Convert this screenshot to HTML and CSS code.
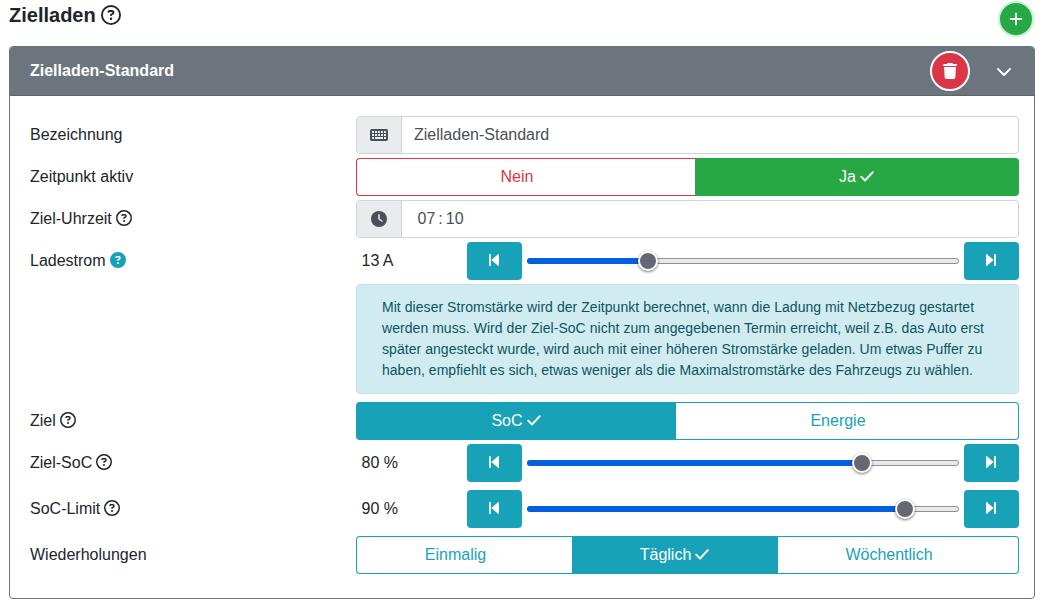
FILE: index.html
```html
<!DOCTYPE html>
<html lang="de">
<head>
<meta charset="utf-8">
<title>Zielladen</title>
<link rel="stylesheet" href="styles.css">
</head>
<body>
<svg class="sprite" aria-hidden="true">
  <symbol id="help" viewBox="0 0 512 512"><path d="M464 256A208 208 0 1 0 48 256a208 208 0 1 0 416 0zM0 256a256 256 0 1 1 512 0A256 256 0 1 1 0 256zm169.8-90.7c7.9-22.3 29.1-37.3 52.8-37.3l58.3 0c34.9 0 63.1 28.3 63.1 63.1c0 22.6-12.1 43.5-31.7 54.8L280 264.4c-.2 13-10.9 23.6-24 23.6c-13.3 0-24-10.7-24-24l0-13.5c0-8.6 4.6-16.5 12.1-20.8l44.3-25.4c4.7-2.7 7.6-7.7 7.6-13.1c0-8.4-6.8-15.1-15.1-15.1l-58.3 0c-3.4 0-6.4 2.1-7.5 5.3l-.4 1.2c-4.4 12.5-18.2 19-30.6 14.6s-19-18.2-14.6-30.6l.4-1.2zM224 352a32 32 0 1 1 64 0 32 32 0 1 1 -64 0z"/></symbol>
  <symbol id="help-solid" viewBox="0 0 512 512"><circle cx="256" cy="256" r="256"/><path fill="#fff" d="M169.8 165.3c7.9-22.3 29.1-37.3 52.8-37.3l58.3 0c34.9 0 63.1 28.3 63.1 63.1c0 22.6-12.1 43.5-31.7 54.8L280 264.4c-.2 13-10.9 23.6-24 23.6c-13.3 0-24-10.7-24-24l0-13.5c0-8.6 4.6-16.5 12.1-20.8l44.3-25.4c4.7-2.7 7.6-7.7 7.6-13.1c0-8.4-6.8-15.1-15.1-15.1l-58.3 0c-3.4 0-6.4 2.1-7.5 5.3l-.4 1.2c-4.4 12.5-18.2 19-30.6 14.6s-19-18.2-14.6-30.6l.4-1.2zM224 352a32 32 0 1 1 64 0 32 32 0 1 1 -64 0z"/></symbol>
  <symbol id="trash" viewBox="0 0 448 512"><path d="M135.2 17.7L128 32 32 32C14.3 32 0 46.3 0 64S14.3 96 32 96l384 0c17.7 0 32-14.3 32-32s-14.3-32-32-32l-96 0-7.2-14.3C307.4 6.8 296.3 0 284.2 0L163.8 0c-12.1 0-23.2 6.8-28.6 17.7zM416 128L32 128 53.2 467c1.6 25.3 22.6 45 47.9 45l245.8 0c25.3 0 46.3-19.7 47.9-45L416 128z"/></symbol>
  <symbol id="check" viewBox="0 0 14 16"><path d="M1.2 8.7 5 12.5 12.8 4.2" fill="none" stroke="currentColor" stroke-width="1.9" stroke-linecap="round" stroke-linejoin="round"/></symbol>
  <symbol id="chevron" viewBox="0 0 16 16"><path d="M2 5l6 6 6-6" fill="none" stroke="currentColor" stroke-width="2" stroke-linecap="round" stroke-linejoin="round"/></symbol>
  <symbol id="plus" viewBox="0 0 14 14"><path d="M7 1.6v10.8M1.6 7h10.8" fill="none" stroke="currentColor" stroke-width="1.8" stroke-linecap="round"/></symbol>
  <symbol id="clock" viewBox="0 0 16 16"><circle cx="8" cy="8" r="8"/><path d="M8 3.7V8l2.9 2" fill="none" stroke="#e9ecef" stroke-width="1.5" stroke-linecap="round" stroke-linejoin="round"/></symbol>
  <symbol id="keyboard" viewBox="0 0 18 12"><rect width="18" height="12" rx="1.8"/><path d="M2 3h2M5 3h2M8 3h2M11 3h2M14 3h2M2 6h2M5 6h2M8 6h2M11 6h2M14 6h2M2 9h2M5 9h8M14 9h2" fill="none" stroke="#e9ecef" stroke-width="1.8"/></symbol>
  <symbol id="prev" viewBox="0 0 10 14"><path d="M1 1.9v10.2" fill="none" stroke="currentColor" stroke-width="1.9" stroke-linecap="round"/><path d="M2.4 7 9 1.2q1-.6 1 .6v10.4q0 1.2-1 .6z"/></symbol>
  <symbol id="next" viewBox="0 0 10 14"><path d="M9 1.9v10.2" fill="none" stroke="currentColor" stroke-width="1.9" stroke-linecap="round"/><path d="M7.6 7 1 1.2q-1-.6-1 .6v10.4q0 1.2 1 .6z"/></symbol>
</svg>

<header class="page-head">
  <h1 class="page-title">Zielladen <svg class="help-lg"><use href="#help"/></svg></h1>
  <button class="round add"><svg><use href="#plus"/></svg></button>
</header>

<section class="card">
  <div class="card-head">
    <span class="card-title">Zielladen-Standard</span>
    <button class="round delete"><svg><use href="#trash"/></svg></button>
    <svg class="chevron"><use href="#chevron"/></svg>
  </div>
  <div class="card-body">
    <div class="row">
      <div class="label">Bezeichnung</div>
      <div class="input"><span class="addon"><svg class="keyboard"><use href="#keyboard"/></svg></span><span class="value">Zielladen-Standard</span></div>
    </div>
    <div class="row">
      <div class="label">Zeitpunkt aktiv</div>
      <div class="group active-group"><button class="btn danger">Nein</button><button class="btn success on">Ja <svg class="check"><use href="#check"/></svg></button></div>
    </div>
    <div class="row">
      <div class="label">Ziel-Uhrzeit <svg class="help"><use href="#help"/></svg></div>
      <div class="input"><span class="addon"><svg class="clock"><use href="#clock"/></svg></span><span class="value time"><span>07</span><span>:</span><span>10</span></span></div>
    </div>
    <div class="row">
      <div class="label">Ladestrom <svg class="help info"><use href="#help-solid"/></svg></div>
      <div class="range"><span class="amount">13 A</span><button class="step"><svg><use href="#prev"/></svg></button><div class="slider"><div class="fill" style="width:121px"></div><div class="thumb"></div></div><button class="step"><svg><use href="#next"/></svg></button></div>
    </div>
    <div class="alert">Mit dieser Stromstärke wird der Zeitpunkt berechnet, wann die Ladung mit Netzbezug gestartet<br>werden muss. Wird der Ziel-SoC nicht zum angegebenen Termin erreicht, weil z.B. das Auto erst<br>später angesteckt wurde, wird auch mit einer höheren Stromstärke geladen. Um etwas Puffer zu<br><span class="alert-end">haben, empfiehlt es sich, etwas weniger als die Maximalstromstärke des Fahrzeugs zu wählen.</span></div>
    <div class="row">
      <div class="label">Ziel <svg class="help"><use href="#help"/></svg></div>
      <div class="group target-group"><button class="btn teal on">SoC <svg class="check"><use href="#check"/></svg></button><button class="btn teal">Energie</button></div>
    </div>
    <div class="row roomy">
      <div class="label">Ziel-SoC <svg class="help"><use href="#help"/></svg></div>
      <div class="range"><span class="amount">80 %</span><button class="step"><svg><use href="#prev"/></svg></button><div class="slider"><div class="fill" style="width:335px"></div><div class="thumb"></div></div><button class="step"><svg><use href="#next"/></svg></button></div>
    </div>
    <div class="row roomy">
      <div class="label">SoC-Limit <svg class="help"><use href="#help"/></svg></div>
      <div class="range"><span class="amount">90 %</span><button class="step"><svg><use href="#prev"/></svg></button><div class="slider"><div class="fill" style="width:378px"></div><div class="thumb"></div></div><button class="step"><svg><use href="#next"/></svg></button></div>
    </div>
    <div class="row">
      <div class="label">Wiederholungen</div>
      <div class="group repeat-group"><button class="btn teal">Einmalig</button><button class="btn teal on">Täglich <svg class="check"><use href="#check"/></svg></button><button class="btn teal">Wöchentlich</button></div>
    </div>
  </div>
</section>
</body>
</html>
```

FILE: styles.css
```css
* { box-sizing: border-box; }
body {
  margin: 0;
  padding: 0 11px 0 9px;
  background: #fff;
  color: #212529;
  font: 16px/24px "Liberation Sans", Arial, sans-serif;
}
svg { fill: currentColor; flex: none; }
button { font: inherit; padding: 0; margin: 0; }
.sprite { display: none; }

.page-head { display: flex; justify-content: space-between; height: 46px; }
.page-title {
  display: flex;
  align-items: center;
  gap: 5px;
  height: 30px;
  margin: 0;
  font-size: 20px;
  font-weight: bold;
}
.help-lg { width: 20px; height: 20px; }
.round {
  display: flex;
  align-items: center;
  justify-content: center;
  border-radius: 50%;
  color: #fff;
}
.add {
  width: 36px;
  height: 36px;
  margin: 1px 1px 0 0;
  border: 2px solid #c5f5cf;
  background: #28a745;
}
.add svg { width: 14px; height: 14px; margin-bottom: 1px; }

.card { height: 553px; border: 1px solid #6c757d; border-radius: 4px; overflow: hidden; }
.card-head {
  display: flex;
  align-items: center;
  height: 49px;
  padding: 0 22px 0 20px;
  background: #6c757d;
  border-bottom: 1px solid #5b636b;
  color: #fff;
}
.card-title { flex: 1; font-weight: bold; }
.delete { width: 40px; height: 40px; border: 2px solid #fff; background: #dc3545; }
.delete svg { width: 14px; height: 16px; }
.chevron { width: 16px; height: 16px; margin-left: 26px; margin-top: 2px; }

.card-body { display: flex; flex-direction: column; gap: 4px; padding: 20px 15px 0 20px; }
.row { display: grid; grid-template-columns: 326px 663px; height: 38px; }
.row.roomy { margin-bottom: 4px; }
.label { display: flex; align-items: center; gap: 4px; height: 37px; }
.help { width: 16px; height: 16px; margin-bottom: 1px; }
.info { color: #17a2b8; }

.input { display: flex; border: 1px solid #ced4da; border-radius: 4px; overflow: hidden; color: #495057; }
.addon {
  display: flex;
  align-items: center;
  justify-content: center;
  width: 45px;
  background: #e9ecef;
  border-right: 1px solid #ced4da;
}
.keyboard { width: 18px; height: 12px; }
.clock { width: 16px; height: 16px; }
.value { padding: 6px 12px 5px; }
.time { display: flex; gap: 3px; padding-left: 15.5px; }

.group { display: grid; }
.active-group { grid-template-columns: 339px 324px; }
.target-group { grid-template-columns: 320px 343px; }
.repeat-group { grid-template-columns: 216px 206px 241px; }
.btn {
  display: flex;
  align-items: center;
  justify-content: center;
  gap: 4px;
  padding-bottom: 1px;
  border: 1px solid currentColor;
  background: #fff;
}
.btn:first-child { border-radius: 4px 0 0 4px; border-right: 0; }
.btn:last-child { border-radius: 0 4px 4px 0; border-left: 0; }
.danger { color: #dc3545; padding-right: 18px; }
.teal { color: #17a2b8; padding-right: 18px; }
.btn.on { color: #fff; }
.success.on { background: #28a745; border-color: #28a745; }
.teal.on { background: #17a2b8; border-color: #17a2b8; padding-right: 1px; }
.check { width: 14px; height: 16px; margin-bottom: 2px; }

.range { display: grid; grid-template-columns: 106px 55px 432px 55px; column-gap: 5px; }
.amount { height: 37px; line-height: 37px; padding-left: 5.5px; }
.step {
  display: flex;
  align-items: center;
  justify-content: center;
  padding: 0 1px 2px 0;
  border: 0;
  border-radius: 4px;
  background: #17a2b8;
  color: #fff;
}
.step svg { width: 10px; height: 14px; }
.slider {
  display: flex;
  align-items: center;
  align-self: center;
  height: 6px;
  border: 1px solid #8f8f9d;
  border-radius: 3px;
  background: #e9e9ed;
}
.fill { flex: none; height: 6px; margin-left: -1px; border-radius: 3px 0 0 3px; background: #0560df; }
.thumb {
  flex: none;
  width: 20px;
  height: 20px;
  margin-left: -10px;
  border: 2px solid #fff;
  border-radius: 50%;
  background: #676774;
  box-shadow: 0 1px 3px rgba(0, 0, 0, .55);
}

.alert {
  width: 663px;
  height: 110px;
  margin: 0 0 4px 326px;
  padding: 12px 25px;
  border: 1px solid #bee5eb;
  border-radius: 4px;
  background: #d1ecf1;
  color: #0c5460;
  font-size: 14px;
  line-height: 21px;
  letter-spacing: .05px;
  white-space: nowrap;
}
.alert-end { letter-spacing: .02px; }
```
